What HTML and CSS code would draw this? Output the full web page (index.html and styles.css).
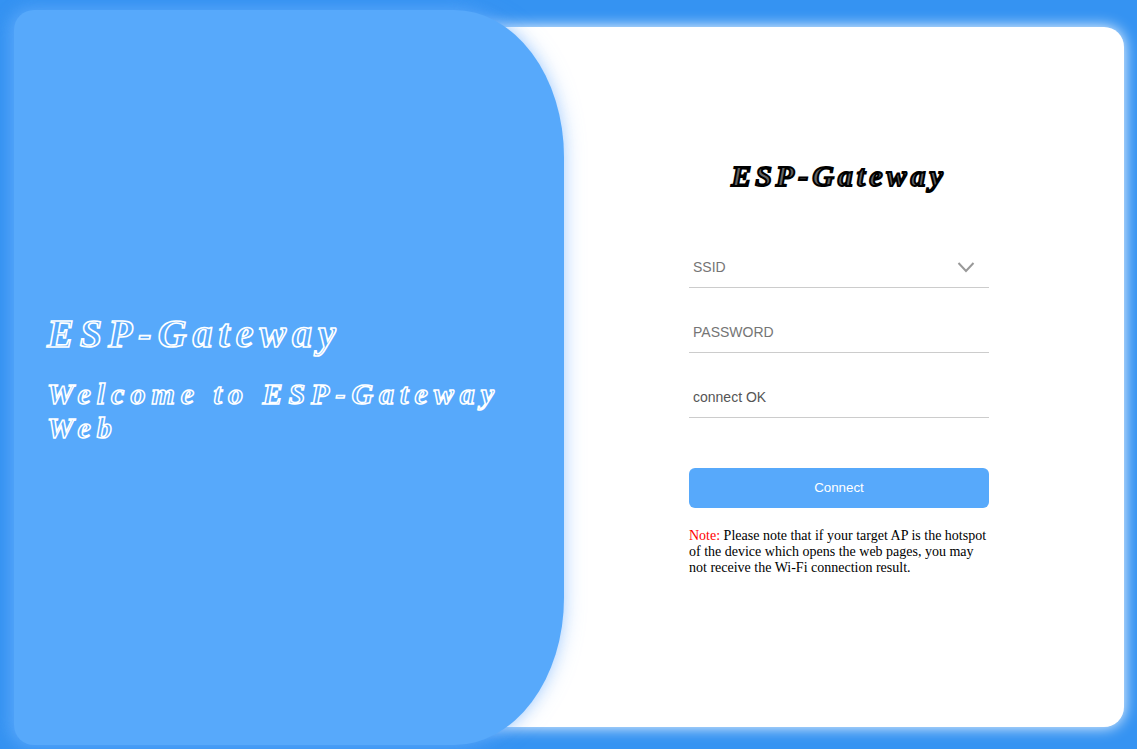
FILE: index.html
```html
<!DOCTYPE html>
<html lang="en">
<head>
<meta charset="utf-8">
<meta name="viewport" content="width=device-width, initial-scale=1">
<title>ESP-Gateway</title>
<link rel="stylesheet" href="styles.css">
</head>
<body class="page">
<main class="card">
  <section class="welcome">
    <h1 class="welcome-title">ESP-Gateway</h1>
    <h2 class="welcome-text">Welcome to ESP-Gateway Web</h2>
  </section>
  <section class="panel">
    <form class="form">
      <h2 class="form-title">ESP-Gateway</h2>
      <div class="field">
        <input class="input" type="text" placeholder="SSID" aria-label="SSID">
        <button class="toggle" type="button" aria-label="Show networks">
          <svg width="18" height="12" viewBox="0 0 18 12" fill="none" stroke="#999" stroke-width="2"><path d="M1.500 2 9 10 16.500 2"/></svg>
        </button>
      </div>
      <div class="field">
        <input class="input" type="password" placeholder="PASSWORD" aria-label="PASSWORD">
      </div>
      <div class="field">
        <input class="input" type="text" value="connect OK" aria-label="Connection status" readonly>
      </div>
      <button class="connect" type="button">Connect</button>
      <p class="note"><span class="note-label">Note:</span> Please note that if your target AP is the hotspot of the device which opens the web pages, you may not receive the Wi-Fi connection result.</p>
    </form>
  </section>
</main>
</body>
</html>
```
FILE: styles.css
```css
* {
  box-sizing: border-box;
}

.page {
  margin: 0;
  min-height: 100vh;
  display: flex;
  padding: 27px 13px 22px 14px;
  background: #3593f2;
  font-family: "Liberation Serif", "Times New Roman", serif;
}

.card {
  flex: 1;
  display: grid;
  grid-template-columns: 55fr 56fr;
}

.welcome {
  z-index: 1;
  display: flex;
  flex-direction: column;
  justify-content: center;
  margin: -17px 0 -18px;
  padding: 0 33px;
  background: #57a9fb;
  border-radius: 20px 20% 20% 20px;
  box-shadow: 0 0 20px rgba(110, 175, 255, 0.5), -6px 0 14px rgba(87, 169, 251, 0.5);
  font-style: italic;
  color: #57a9fb;
}

.welcome-title {
  margin: 0 0 20px;
  font-size: 40px;
  line-height: 46px;
  letter-spacing: 6px;
  -webkit-text-stroke: 0.04em #fff;
}

.welcome-text {
  margin: 0;
  font-size: 30px;
  line-height: 34px;
  letter-spacing: 6px;
  -webkit-text-stroke: 0.05em #fff;
}

.panel {
  display: flex;
  align-items: center;
  justify-content: center;
  margin-left: -120px;
  padding: 0 10px 20px 120px;
  background: #fff;
  border-radius: 20px;
  box-shadow: 0 0 15px #fff;
}

.form {
  width: 300px;
}

.form-title {
  margin: 0 0 55px;
  font-size: 30px;
  line-height: 34px;
  font-style: italic;
  letter-spacing: 4px;
  text-align: center;
  color: #666;
  -webkit-text-stroke: 2px #000;
}

.field {
  display: flex;
  align-items: center;
  height: 40px;
  margin-bottom: 25px;
  border-bottom: 1px solid #ccc;
}

.input {
  flex: 1;
  min-width: 0;
  height: 100%;
  padding: 0 4px;
  border: 0;
  outline: 0;
  background: transparent;
  font: 14px "Liberation Sans", Arial, sans-serif;
  color: #555;
}

.input::placeholder {
  color: #757575;
}

.toggle {
  display: flex;
  margin-right: 14px;
  padding: 0;
  border: 0;
  background: none;
}

.connect {
  width: 100%;
  height: 40px;
  margin-top: 25px;
  border: 0;
  border-radius: 6px;
  background: #57a9fb;
  color: #fff;
  font-family: "Liberation Sans", Arial, sans-serif;
}

.note {
  margin: 20px 0 0;
  font-size: 14px;
  line-height: 16px;
}

.note-label {
  color: #f00;
}
```
